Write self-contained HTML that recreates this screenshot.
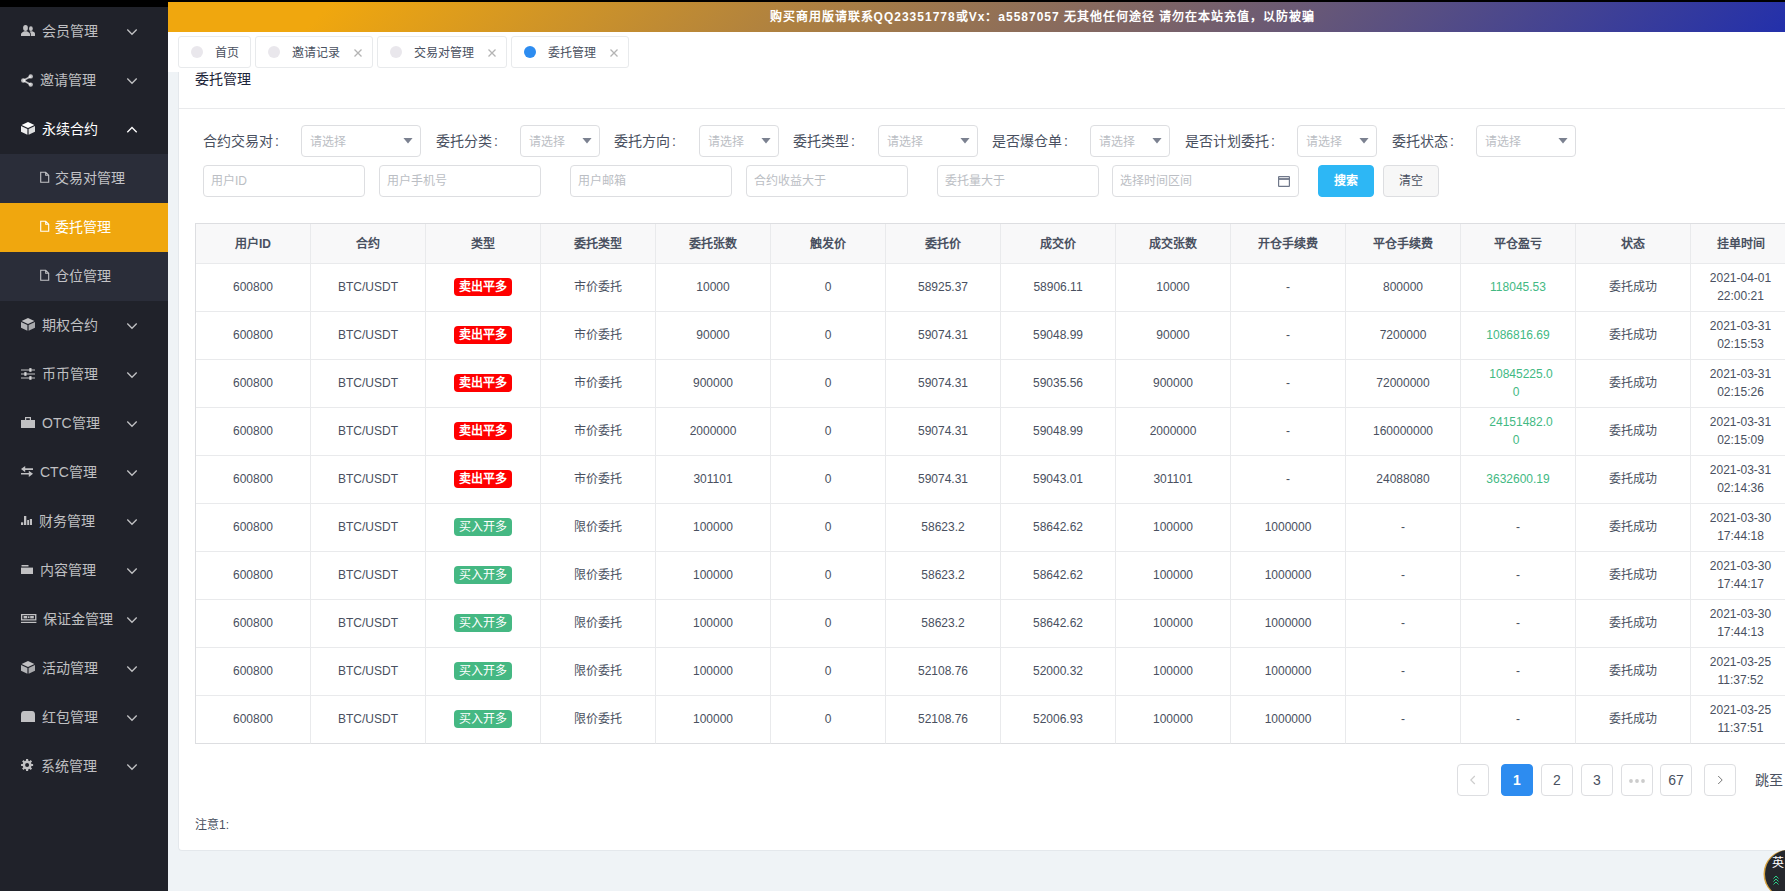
<!DOCTYPE html>
<html lang="zh-CN">
<head>
<meta charset="utf-8">
<title>委托管理</title>
<style>
*{box-sizing:border-box;margin:0;padding:0}
html,body{width:1785px;height:891px;overflow:hidden}
body{font-family:"Liberation Sans",sans-serif;font-size:12px;color:#495060;background:#eff3f6;position:relative}
/* ---------- sidebar ---------- */
#side{position:absolute;left:0;top:0;width:168px;height:891px;background:#20222a;border-top:7px solid #000;z-index:5}
#side ul{list-style:none}
#side li.it{height:49px;line-height:49px;position:relative;color:rgba(255,255,255,.72);font-size:14px;white-space:nowrap}
#side li.it.open{color:#fff}
#side li.it svg.ic{position:absolute;left:21px;top:17px;width:14px;height:14px;fill:currentColor}
#side li.it span.t{position:absolute;left:42px;top:0}
#side li.it svg.ch{position:absolute;left:126px;top:20px;width:12px;height:10px;fill:none;stroke:currentColor;stroke-width:1.3}
#side .sub{background:#2a2d39}
#side .sub li{height:49px;line-height:49px;position:relative;color:rgba(255,255,255,.72);font-size:14px;white-space:nowrap}
#side .sub li.act{background:#f0a70e;color:#fff}
#side .sub li svg{position:absolute;left:40px;top:17px;width:10px;height:12px;fill:none;stroke:currentColor;stroke-width:1.1}
#side .sub li span{position:absolute;left:55px;top:0}
/* ---------- top ---------- */
#topblk{position:absolute;left:168px;top:0;width:1617px;height:2px;background:#000}
#notice{position:absolute;left:168px;top:2px;width:1617px;padding-left:132px;height:30px;line-height:30px;color:#fff;font-size:12px;font-weight:bold;text-align:center;letter-spacing:1px;white-space:nowrap;
 background:linear-gradient(135deg,#f0a70e 0%,#f0a70e 10%,#2330ab 100%)}
#tabs{position:absolute;left:168px;top:32px;width:1617px;height:40px;background:#fff;z-index:3}
.tab{position:absolute;top:4px;height:32px;border:1px solid #e8eaec;border-radius:3px;background:#fff;color:#495060;font-size:12px;line-height:30px;white-space:nowrap}
.tab i{position:absolute;left:12px;top:9px;width:12px;height:12px;border-radius:50%;background:#e9e7ec}
.tab.on i{background:#2d8cf0}
.tab b{position:absolute;left:36px;top:1px;font-weight:normal}
.tab svg{position:absolute;right:10px;top:12px;width:8px;height:8px;stroke:#b4b4b4;stroke-width:1.3;fill:none}
/* ---------- card ---------- */
#card{position:absolute;left:178px;top:50px;width:1700px;height:801px;background:#fff;border-left:1px solid #e4e8ec;border-bottom:1px solid #e4e8ec;border-radius:0 0 0 4px}
#ttl{position:absolute;left:195px;top:69px;font-size:14px;line-height:20px;color:#1c2438;font-weight:normal;white-space:nowrap}
#hr{position:absolute;left:179px;top:108px;width:1700px;height:1px;background:#e9eaec}
.lb em{font-style:normal;margin-left:2px}
.lb{position:absolute;top:121px;height:40px;line-height:40px;font-size:14px;color:#495060;white-space:nowrap}
.sel{position:absolute;top:125px;height:32px;border:1px solid #dddee1;border-radius:4px;background:#fff;line-height:32px;color:#bbbec4;font-size:12px;padding-left:8px}
.sel:after{content:"";position:absolute;right:7px;top:11.500px;width:10px;height:6px;background:#7b8190;clip-path:polygon(0 0,100% 0,50% 100%)}
.inp{position:absolute;top:165px;height:32px;width:162px;border:1px solid #dddee1;border-radius:4px;background:#fff;line-height:30px;color:#bbbec4;font-size:12px;padding-left:7px;white-space:nowrap}
.btn{position:absolute;top:165px;height:32px;width:56px;border-radius:4px;line-height:30px;text-align:center;font-size:12px;border:1px solid #dddee1;background:#f7f7f7;color:#495060}
.btn.info{background:#2db7f5;border-color:#2db7f5;color:#fff;font-weight:bold}
/* ---------- table ---------- */
#tb{position:absolute;left:195px;top:223px;border-collapse:separate;border-spacing:0;table-layout:fixed;width:1596px;border-top:1px solid #dddee1;border-left:1px solid #dddee1;z-index:1;background:#fff}
#tb th,#tb td{border-right:1px solid #e9eaec;border-bottom:1px solid #e9eaec;text-align:center;font-size:12px;color:#495060;padding:0;line-height:18px;vertical-align:middle;white-space:nowrap}
#tb th{height:40px;background:#f8f8f9;font-weight:bold}
#tb td{height:48px;background:#fff;padding-bottom:2px}
#tb tr:last-child td{border-bottom:1px solid #dddee1}
.tg{display:inline-block;width:58px;height:18px;line-height:18px;border-radius:4px;color:#fff;font-weight:bold;font-size:12px;vertical-align:middle}
.tg.r{background:#ff0000}
.tg.g{background:#45b883;font-weight:normal}
.gn{color:#42b983}
.gn.w{display:inline-block;position:relative;left:3px}
.gn.w u{text-decoration:none;position:relative;left:-5px}
/* ---------- pager ---------- */
.pg{position:absolute;top:764px;width:32px;height:32px;border:1px solid #dddee1;border-radius:4px;background:#fff;text-align:center;line-height:30px;font-size:14px;color:#495060}
.pg.on{background:#2d8cf0;border-color:#2d8cf0;color:#fff;font-weight:bold}
.pg svg{position:absolute;left:11px;top:10px;width:8px;height:10px;fill:none;stroke:#ccc;stroke-width:1.1}
.pg.nx svg{stroke:#777;stroke-width:1}
#jump{position:absolute;left:1755px;top:764px;line-height:32px;font-size:14px;color:#495060;white-space:nowrap}
#note{position:absolute;left:195px;top:816px;line-height:18px;font-size:12px;color:#495060}
#ime{position:absolute;left:1765px;top:850px;width:48px;height:48px;border-radius:50%;background:#25272c;box-shadow:-1.500px 0 0 0 #d9a441;color:#fff;font-size:12px;z-index:9}
#ime span{position:absolute;left:7px;top:7px;line-height:12px}
#ime svg{position:absolute;left:8px;top:25px;width:6px;height:10px;fill:none;stroke:#2ecf8a;stroke-width:1}

</style>
</head>
<body>
<div id="side"><ul>
<li class="it"><svg class="ic" viewBox="0 0 14 11" style="left:21px;top:18px;width:14px;height:11px"><ellipse cx="4.500" cy="3" rx="2.400" ry="2.900"/><path d="M0 11V9.200C0 7.600 2 7.200 3.300 6.300h2.400C7 7.200 9 7.600 9 9.200V11z"/><ellipse cx="9.900" cy="3.700" rx="1.900" ry="2.400"/><path d="M9.800 11V9c0-1-.500-1.600-1.200-2 .300-.300.700-.500 1.100-.700h1.700c.900.500 2.600.900 2.600 2.400V11z"/></svg><span class="t" style="left:42px">会员管理</span><svg class="ch" viewBox="0 0 12 10"><path d="M1.300 2.500L6 7.300 10.700 2.500"/></svg></li>
<li class="it"><svg class="ic" viewBox="0 0 12 13" style="left:21px;top:18px;width:12px;height:13px"><circle cx="2.300" cy="6.500" r="2.200"/><circle cx="9.700" cy="2.400" r="2.200"/><circle cx="9.700" cy="10.600" r="2.200"/><path d="M2.300 6.500L9.700 2.400M2.300 6.500L9.700 10.600" stroke="currentColor" stroke-width="1.700" fill="none"/></svg><span class="t" style="left:40px">邀请管理</span><svg class="ch" viewBox="0 0 12 10"><path d="M1.300 2.500L6 7.300 10.700 2.500"/></svg></li>
<li class="it open"><svg class="ic" viewBox="0 0 14 13" style="left:21px;top:17px;width:14px;height:13px"><path d="M7 0L13.400 2.900 7 5.900.600 2.900z"/><path d="M0 3.900L6.400 6.900V12.800L0 9.800z" opacity=".92"/><path d="M14 3.900L7.600 6.900V12.800L14 9.800z" opacity=".85"/></svg><span class="t" style="left:42px">永续合约</span><svg class="ch" viewBox="0 0 12 10"><path d="M1.300 7.300L6 2.500 10.700 7.300"/></svg></li>
<li><ul class="sub"><li><svg viewBox="0 0 10 12"><path d="M.7 1.200h5l3 3V11.300H.7zM5.700 1.200V4.200h3"/></svg><span>交易对管理</span></li><li class="act"><svg viewBox="0 0 10 12"><path d="M.7 1.200h5l3 3V11.300H.7zM5.700 1.200V4.200h3"/></svg><span>委托管理</span></li><li><svg viewBox="0 0 10 12"><path d="M.7 1.200h5l3 3V11.300H.7zM5.700 1.200V4.200h3"/></svg><span>仓位管理</span></li></ul></li>
<li class="it"><svg class="ic" viewBox="0 0 14 13" style="left:21px;top:17px;width:14px;height:13px"><path d="M7 0L13.400 2.900 7 5.900.600 2.900z"/><path d="M0 3.900L6.400 6.900V12.800L0 9.800z" opacity=".92"/><path d="M14 3.900L7.600 6.900V12.800L14 9.800z" opacity=".85"/></svg><span class="t" style="left:42px">期权合约</span><svg class="ch" viewBox="0 0 12 10"><path d="M1.300 2.500L6 7.300 10.700 2.500"/></svg></li>
<li class="it"><svg class="ic" viewBox="0 0 14 12" style="left:21px;top:18px;width:14px;height:12px"><path d="M0 1.400h14v1.100H0zM0 5.400h14v1.100H0zM0 9.400h14v1.100H0z"/><rect x="8.300" y="0" width="2.200" height="3.900"/><rect x="3.300" y="4" width="2.200" height="3.900"/><rect x="8.300" y="8" width="2.200" height="3.900"/></svg><span class="t" style="left:42px">币币管理</span><svg class="ch" viewBox="0 0 12 10"><path d="M1.300 2.500L6 7.300 10.700 2.500"/></svg></li>
<li class="it"><svg class="ic" viewBox="0 0 14 11" style="left:21px;top:18px;width:14px;height:11px"><path d="M0 3h14v8H0z"/><path d="M4.600 3V.600h4.800V3" fill="none" stroke="currentColor" stroke-width="1.200"/></svg><span class="t" style="left:42px">OTC管理</span><svg class="ch" viewBox="0 0 12 10"><path d="M1.300 2.500L6 7.300 10.700 2.500"/></svg></li>
<li class="it"><svg class="ic" viewBox="0 0 12 11" style="left:21px;top:18px;width:12px;height:11px"><path d="M0 3.100L4.200 0V2.300H12V3.900H4.200V6.200z"/><path d="M12 7.800L7.800 4.700V7H0V8.600H7.800V10.900z"/></svg><span class="t" style="left:40px">CTC管理</span><svg class="ch" viewBox="0 0 12 10"><path d="M1.300 2.500L6 7.300 10.700 2.500"/></svg></li>
<li class="it"><svg class="ic" viewBox="0 0 11 9" style="left:21px;top:19px;width:11px;height:9px"><rect x="0" y="6.300" width="2.200" height="2.700"/><rect x="3" y="0" width="2.300" height="9"/><rect x="6.200" y="4" width="1.800" height="5"/><rect x="8.800" y="3" width="2.200" height="6"/></svg><span class="t" style="left:39px">财务管理</span><svg class="ch" viewBox="0 0 12 10"><path d="M1.300 2.500L6 7.300 10.700 2.500"/></svg></li>
<li class="it"><svg class="ic" viewBox="0 0 12 9" style="left:21px;top:19px;width:12px;height:9px"><path d="M.500 0H7.500V1.500H.500z"/><path d="M0 2.600H12V9H0z"/></svg><span class="t" style="left:40px">内容管理</span><svg class="ch" viewBox="0 0 12 10"><path d="M1.300 2.500L6 7.300 10.700 2.500"/></svg></li>
<li class="it"><svg class="ic" viewBox="0 0 16 9" style="left:21px;top:19px;width:16px;height:9px"><path d="M0 0H15.400V6.400H0zM1.300 1.200V5.200H14.100V1.200z" fill-rule="evenodd"/><rect x="2.600" y="2" width="3.600" height="2.400"/><rect x="9.200" y="2" width="3.600" height="2.400"/><rect x="6.900" y="2.300" width="1.600" height="1.800"/><rect x="0" y="7.800" width="15.400" height="1.200"/></svg><span class="t" style="left:43px">保证金管理</span><svg class="ch" viewBox="0 0 12 10"><path d="M1.300 2.500L6 7.300 10.700 2.500"/></svg></li>
<li class="it"><svg class="ic" viewBox="0 0 14 13" style="left:21px;top:17px;width:14px;height:13px"><path d="M7 0L13.400 2.900 7 5.900.600 2.900z"/><path d="M0 3.900L6.400 6.900V12.800L0 9.800z" opacity=".92"/><path d="M14 3.900L7.600 6.900V12.800L14 9.800z" opacity=".85"/></svg><span class="t" style="left:42px">活动管理</span><svg class="ch" viewBox="0 0 12 10"><path d="M1.300 2.500L6 7.300 10.700 2.500"/></svg></li>
<li class="it"><svg class="ic" viewBox="0 0 14 11" style="left:21px;top:18px;width:14px;height:11px"><path d="M0 11V3.400C0 1.200 1.500 0 3 0H11C12.500 0 14 1.200 14 3.400V11z"/></svg><span class="t" style="left:42px">红包管理</span><svg class="ch" viewBox="0 0 12 10"><path d="M1.300 2.500L6 7.300 10.700 2.500"/></svg></li>
<li class="it"><svg class="ic" viewBox="0 0 13 12" style="left:21px;top:17px;width:13px;height:12px"><path fill-rule="evenodd" d="M10.48 4.95 L12.11 4.95 L12.11 7.05 L10.48 7.05 L9.94 8.35 L11.09 9.51 L9.61 10.99 L8.45 9.84 L7.15 10.38 L7.15 12.01 L5.05 12.01 L5.05 10.38 L3.75 9.84 L2.59 10.99 L1.11 9.51 L2.26 8.35 L1.72 7.05 L0.09 7.05 L0.09 4.95 L1.72 4.95 L2.26 3.65 L1.11 2.49 L2.59 1.01 L3.75 2.16 L5.05 1.62 L5.05 -0.01 L7.15 -0.01 L7.15 1.62 L8.45 2.16 L9.61 1.01 L11.09 2.49 L9.94 3.65z M4.10 6.00 a2.00 2.00 0 1 0 4.00 0 a2.00 2.00 0 1 0 -4.00 0z"/></svg><span class="t" style="left:41px">系统管理</span><svg class="ch" viewBox="0 0 12 10"><path d="M1.300 2.500L6 7.300 10.700 2.500"/></svg></li>
</ul></div>
<div id="topblk"></div>
<div id="notice">购买商用版请联系QQ23351778或Vx：a5587057 无其他任何途径 请勿在本站充值，以防被骗</div>
<div id="tabs">
<div class="tab" style="left:10px;width:73px"><i></i><b>首页</b></div>
<div class="tab" style="left:87px;width:118px"><i></i><b>邀请记录</b><svg viewBox="0 0 8 8"><path d="M.5.5l7 7M7.500.5l-7 7"/></svg></div>
<div class="tab" style="left:209px;width:130px"><i></i><b>交易对管理</b><svg viewBox="0 0 8 8"><path d="M.5.5l7 7M7.500.5l-7 7"/></svg></div>
<div class="tab on" style="left:343px;width:118px"><i></i><b>委托管理</b><svg viewBox="0 0 8 8"><path d="M.5.5l7 7M7.500.5l-7 7"/></svg></div>
</div>
<div id="card"></div>
<h3 id="ttl">委托管理</h3>
<div id="hr"></div>
<label class="lb" style="left:203px">合约交易对<em>:</em></label>
<label class="lb" style="left:436px">委托分类<em>:</em></label>
<label class="lb" style="left:614px">委托方向<em>:</em></label>
<label class="lb" style="left:793px">委托类型<em>:</em></label>
<label class="lb" style="left:992px">是否爆仓单<em>:</em></label>
<label class="lb" style="left:1185px">是否计划委托<em>:</em></label>
<label class="lb" style="left:1392px">委托状态<em>:</em></label>
<div class="sel" style="left:301px;width:120px">请选择</div>
<div class="sel" style="left:520px;width:80px">请选择</div>
<div class="sel" style="left:699px;width:80px">请选择</div>
<div class="sel" style="left:878px;width:100px">请选择</div>
<div class="sel" style="left:1090px;width:80px">请选择</div>
<div class="sel" style="left:1297px;width:80px">请选择</div>
<div class="sel" style="left:1476px;width:100px">请选择</div>
<div class="inp" style="left:203px;width:162px">用户ID</div>
<div class="inp" style="left:379px;width:162px">用户手机号</div>
<div class="inp" style="left:570px;width:162px">用户邮箱</div>
<div class="inp" style="left:746px;width:162px">合约收益大于</div>
<div class="inp" style="left:937px;width:162px">委托量大于</div>
<div class="inp" style="left:1112px;width:187px">选择时间区间<svg viewBox="0 0 12 12" style="position:absolute;right:8px;top:9px;width:12px;height:12px;fill:none;stroke:#70788a;stroke-width:1.200"><rect x=".6" y="1.600" width="10.800" height="9.800" rx=".5"/><path d="M.6 4h10.800" stroke-width="1.800"/></svg></div>
<div class="btn info" style="left:1318px">搜索</div>
<div class="btn" style="left:1383px">清空</div>
<table id="tb"><colgroup><col style="width:115px"><col style="width:115px"><col style="width:115px"><col style="width:115px"><col style="width:115px"><col style="width:115px"><col style="width:115px"><col style="width:115px"><col style="width:115px"><col style="width:115px"><col style="width:115px"><col style="width:115px"><col style="width:115px"><col style="width:100px"></colgroup>
<thead><tr><th>用户ID</th><th>合约</th><th>类型</th><th>委托类型</th><th>委托张数</th><th>触发价</th><th>委托价</th><th>成交价</th><th>成交张数</th><th>开仓手续费</th><th>平仓手续费</th><th>平仓盈亏</th><th>状态</th><th>挂单时间</th></tr></thead><tbody>
<tr><td>600800</td><td>BTC/USDT</td><td><span class="tg r">卖出平多</span></td><td>市价委托</td><td>10000</td><td>0</td><td>58925.37</td><td>58906.11</td><td>10000</td><td>-</td><td>800000</td><td><span class="gn">118045.53</span></td><td>委托成功</td><td>2021-04-01<br>22:00:21</td></tr>
<tr><td>600800</td><td>BTC/USDT</td><td><span class="tg r">卖出平多</span></td><td>市价委托</td><td>90000</td><td>0</td><td>59074.31</td><td>59048.99</td><td>90000</td><td>-</td><td>7200000</td><td><span class="gn">1086816.69</span></td><td>委托成功</td><td>2021-03-31<br>02:15:53</td></tr>
<tr><td>600800</td><td>BTC/USDT</td><td><span class="tg r">卖出平多</span></td><td>市价委托</td><td>900000</td><td>0</td><td>59074.31</td><td>59035.56</td><td>900000</td><td>-</td><td>72000000</td><td><span class="gn w">10845225.0<br><u>0</u></span></td><td>委托成功</td><td>2021-03-31<br>02:15:26</td></tr>
<tr><td>600800</td><td>BTC/USDT</td><td><span class="tg r">卖出平多</span></td><td>市价委托</td><td>2000000</td><td>0</td><td>59074.31</td><td>59048.99</td><td>2000000</td><td>-</td><td>160000000</td><td><span class="gn w">24151482.0<br><u>0</u></span></td><td>委托成功</td><td>2021-03-31<br>02:15:09</td></tr>
<tr><td>600800</td><td>BTC/USDT</td><td><span class="tg r">卖出平多</span></td><td>市价委托</td><td>301101</td><td>0</td><td>59074.31</td><td>59043.01</td><td>301101</td><td>-</td><td>24088080</td><td><span class="gn">3632600.19</span></td><td>委托成功</td><td>2021-03-31<br>02:14:36</td></tr>
<tr><td>600800</td><td>BTC/USDT</td><td><span class="tg g">买入开多</span></td><td>限价委托</td><td>100000</td><td>0</td><td>58623.2</td><td>58642.62</td><td>100000</td><td>1000000</td><td>-</td><td>-</td><td>委托成功</td><td>2021-03-30<br>17:44:18</td></tr>
<tr><td>600800</td><td>BTC/USDT</td><td><span class="tg g">买入开多</span></td><td>限价委托</td><td>100000</td><td>0</td><td>58623.2</td><td>58642.62</td><td>100000</td><td>1000000</td><td>-</td><td>-</td><td>委托成功</td><td>2021-03-30<br>17:44:17</td></tr>
<tr><td>600800</td><td>BTC/USDT</td><td><span class="tg g">买入开多</span></td><td>限价委托</td><td>100000</td><td>0</td><td>58623.2</td><td>58642.62</td><td>100000</td><td>1000000</td><td>-</td><td>-</td><td>委托成功</td><td>2021-03-30<br>17:44:13</td></tr>
<tr><td>600800</td><td>BTC/USDT</td><td><span class="tg g">买入开多</span></td><td>限价委托</td><td>100000</td><td>0</td><td>52108.76</td><td>52000.32</td><td>100000</td><td>1000000</td><td>-</td><td>-</td><td>委托成功</td><td>2021-03-25<br>11:37:52</td></tr>
<tr><td>600800</td><td>BTC/USDT</td><td><span class="tg g">买入开多</span></td><td>限价委托</td><td>100000</td><td>0</td><td>52108.76</td><td>52006.93</td><td>100000</td><td>1000000</td><td>-</td><td>-</td><td>委托成功</td><td>2021-03-25<br>11:37:51</td></tr>
</tbody></table>
<div class="pg" style="left:1457px"><svg viewBox="0 0 8 10"><path d="M5.800 1L1.800 5l4 4"/></svg></div>
<div class="pg on" style="left:1501px">1</div>
<div class="pg" style="left:1541px">2</div>
<div class="pg" style="left:1581px">3</div>
<div class="pg" style="left:1621px"><svg viewBox="0 0 16 4" style="left:7px;top:14px;width:16px;height:4px;fill:#ccc;stroke:none"><circle cx="2" cy="2" r="1.900"/><circle cx="8" cy="2" r="1.900"/><circle cx="14" cy="2" r="1.900"/></svg></div>
<div class="pg" style="left:1660px">67</div>
<div class="pg nx" style="left:1704px"><svg viewBox="0 0 8 10"><path d="M2.200 1l4 4-4 4"/></svg></div>
<div id="jump">跳至</div>
<div id="note">注意1:</div>
<div id="ime"><span>英</span><svg viewBox="0 0 6 10"><path d="M.5 3.500l2.500-2.500 2.500 2.500M.5 6.500l2.500-2.500 2.500 2.500M.5 9.500l2.500-2.500 2.500 2.500"/></svg></div>
</body>
</html>
